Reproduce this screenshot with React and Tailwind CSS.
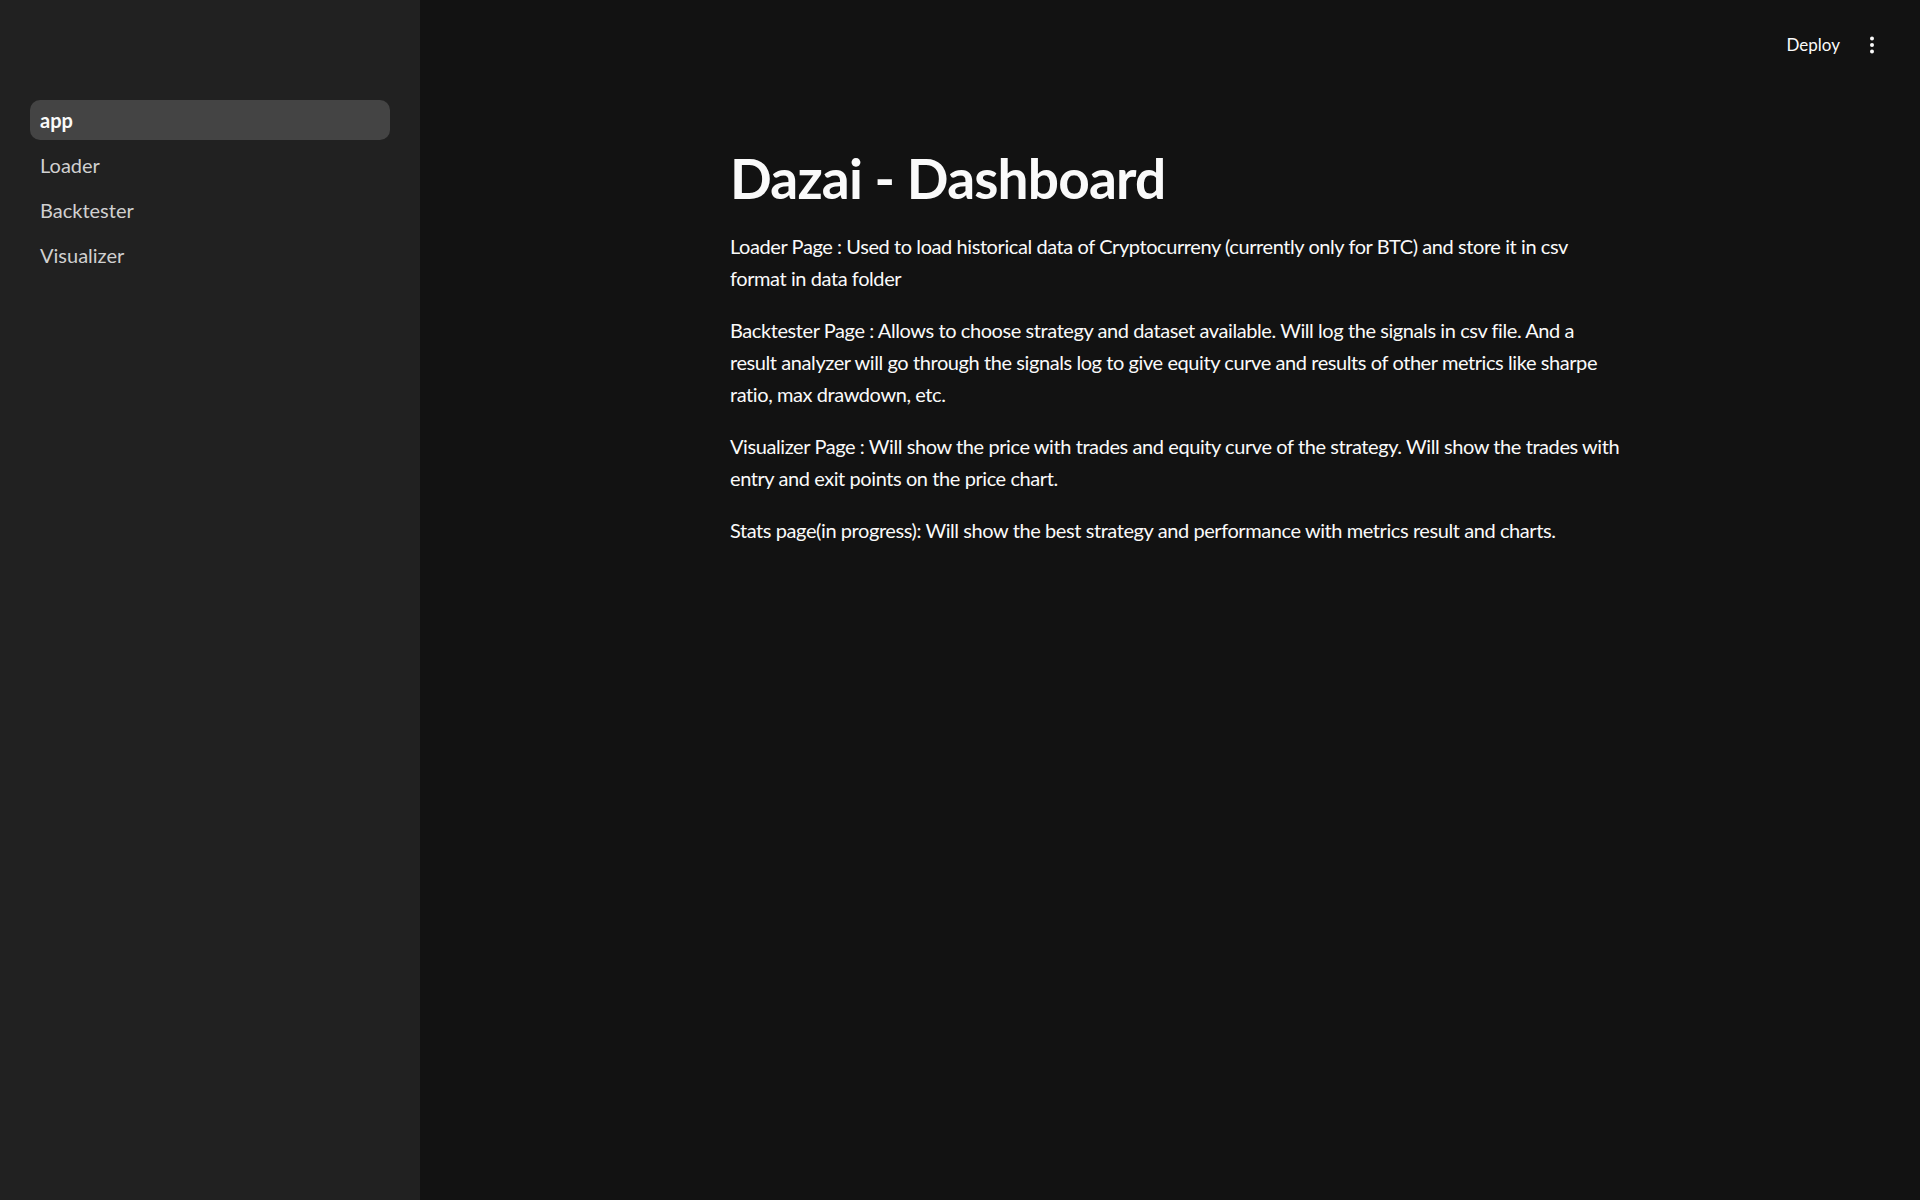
import React from 'react';

const navItems = ['app', 'Loader', 'Backtester', 'Visualizer'];

// each paragraph split where the original wraps
const paragraphs = [
  [
    'Loader Page : Used to load historical data of Cryptocurreny (currently only for BTC) and store it in csv',
    'format in data folder',
  ],
  [
    'Backtester Page : Allows to choose strategy and dataset available. Will log the signals in csv file. And a',
    'result analyzer will go through the signals log to give equity curve and results of other metrics like sharpe',
    'ratio, max drawdown, etc.',
  ],
  [
    'Visualizer Page : Will show the price with trades and equity curve of the strategy. Will show the trades with',
    'entry and exit points on the price chart.',
  ],
  ['Stats page(in progress): Will show the best strategy and performance with metrics result and charts.'],
];

const Sidebar = () => (
  <aside className="w-[420px] shrink-0 bg-[#212121] min-h-screen pt-[100px] px-[30px]">
    <nav className="flex flex-col gap-[5px]">
      {navItems.map((item, i) => (
        <div
          key={item}
          className={`h-[40px] flex items-center px-[10px] rounded-[10px] text-[20px] ${
            i === 0 ? 'bg-[#444444] text-[#fafafa] font-bold' : 'text-[#d0d0d0]'
          }`}
        >
          {item}
        </div>
      ))}
    </nav>
  </aside>
);

const Header = () => (
  <header className="h-[90px] flex items-center justify-end pr-[38px] gap-[14px]">
    <button className="text-[17px] text-[#fafafa] px-[8px]">Deploy</button>
    <svg width="20" height="20" viewBox="0 0 20 20" className="text-[#fafafa]">
      <circle cx="10" cy="3.5" r="2" fill="currentColor" />
      <circle cx="10" cy="10" r="2" fill="currentColor" />
      <circle cx="10" cy="16.5" r="2" fill="currentColor" />
    </svg>
  </header>
);

export default function App() {
  return (
    <div
      className="flex min-h-screen bg-[#121212] text-[#fafafa]"
      style={{ fontFamily: 'Lato, "Noto Sans", sans-serif' }}
    >
      <Sidebar />
      <main className="flex-1 flex flex-col">
        <Header />
        <div className="w-[880px] mx-auto pt-[39px]">
          <h1 className="text-[55px] font-bold leading-[1.2] tracking-[-0.015em] pt-[16px] pb-[19px]">Dazai - Dashboard</h1>
          <div className="flex flex-col gap-[20px]">
            {paragraphs.map((lines, i) => (
              <p key={i} className="text-[20px] leading-[32px] tracking-[-0.021em]">
                {lines.map((line, j) => (
                  <span key={j} className="block whitespace-nowrap">
                    {line}
                  </span>
                ))}
              </p>
            ))}
          </div>
        </div>
      </main>
    </div>
  );
}
